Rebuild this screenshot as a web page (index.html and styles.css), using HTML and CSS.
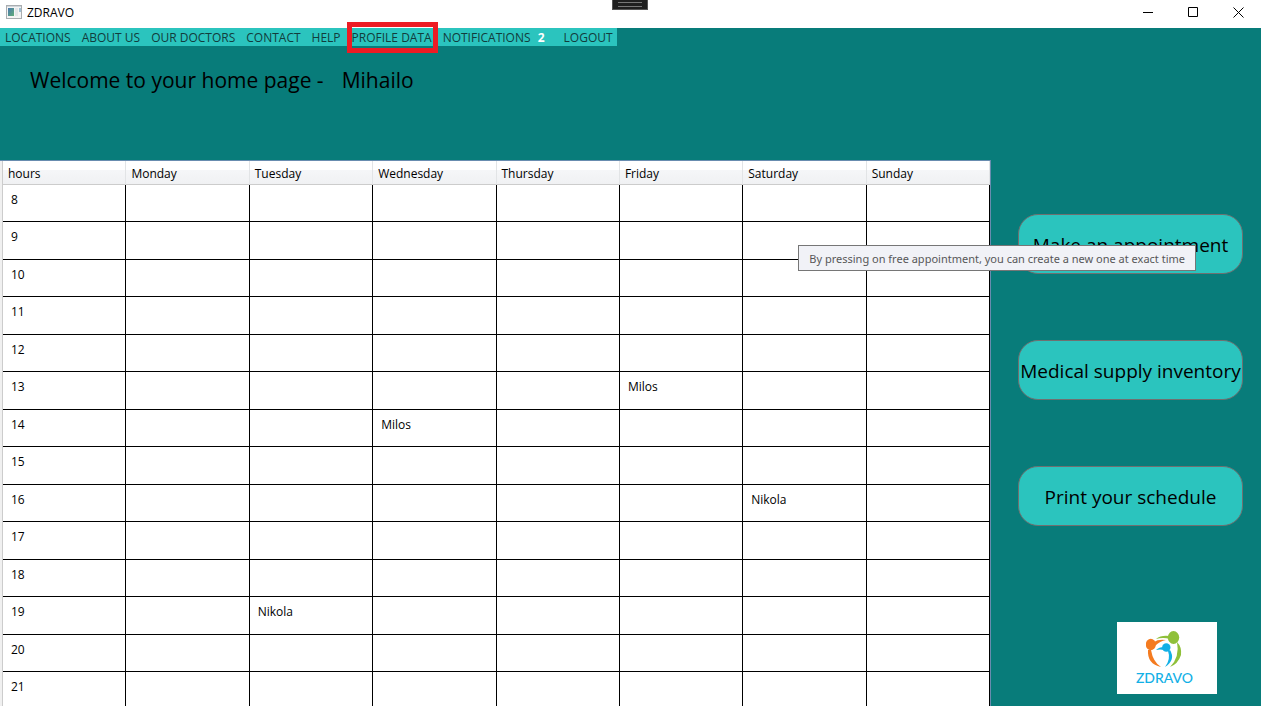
FILE: index.html
```html
<!DOCTYPE html>
<html lang="en">
<head>
<meta charset="utf-8">
<title>ZDRAVO</title>
<link rel="stylesheet" href="styles.css">
</head>
<body>
<div class="window">
  <header class="titlebar">
    <svg class="app-icon" width="16" height="14" viewBox="0 0 16 14" aria-hidden="true">
      <defs><linearGradient id="pane" x1="0" y1="0" x2="1" y2="1"><stop offset="0" stop-color="#4a78b0"/><stop offset="1" stop-color="#5fae78"/></linearGradient></defs>
      <rect x=".5" y=".5" width="15" height="13" fill="#f4f4f4" stroke="#a9adb0"/>
      <rect x="1" y="1" width="14" height="1" fill="#cfd5da"/>
      <rect x="2" y="3" width="6" height="8" fill="url(#pane)"/>
      <rect x="9" y="3" width="3" height="8" fill="#e2e6e8"/>
      <rect x="13" y="3" width="2" height="4" fill="#9fc0d4"/>
    </svg>
    <span class="title">ZDRAVO</span>
    <div class="grip" aria-hidden="true"></div>
    <div class="controls">
      <button type="button" aria-label="Minimize"><svg width="11" height="11" viewBox="0 0 11 11"><path d="M0 5.5h10"/></svg></button>
      <button type="button" aria-label="Maximize"><svg width="11" height="11" viewBox="0 0 11 11"><path d="M.5.5h9v9h-9z"/></svg></button>
      <button type="button" aria-label="Close"><svg width="11" height="11" viewBox="0 0 11 11"><path d="M.5.5l10 10M10.500 .5l-10 10"/></svg></button>
    </div>
  </header>
  <nav class="menu">
    <a href="#locations">LOCATIONS</a>
    <a href="#about">ABOUT US</a>
    <a href="#doctors">OUR DOCTORS</a>
    <a href="#contact">CONTACT</a>
    <a href="#help">HELP</a>
    <a href="#profile" class="marked">PROFILE DATA</a>
    <a href="#notifications">NOTIFICATIONS <b class="count">2</b></a>
    <a href="#logout">LOGOUT</a>
  </nav>
  <h1 class="welcome"><span>Welcome to your home page -</span><span>Mihailo</span></h1>
  <main class="content">
    <div class="schedule">
      <table>
        <thead><tr><th>hours</th><th>Monday</th><th>Tuesday</th><th>Wednesday</th><th>Thursday</th><th>Friday</th><th>Saturday</th><th>Sunday</th></tr></thead>
        <tbody>
          <tr><td>8</td><td></td><td></td><td></td><td></td><td></td><td></td><td></td></tr>
          <tr><td>9</td><td></td><td></td><td></td><td></td><td></td><td></td><td></td></tr>
          <tr><td>10</td><td></td><td></td><td></td><td></td><td></td><td></td><td></td></tr>
          <tr><td>11</td><td></td><td></td><td></td><td></td><td></td><td></td><td></td></tr>
          <tr><td>12</td><td></td><td></td><td></td><td></td><td></td><td></td><td></td></tr>
          <tr><td>13</td><td></td><td></td><td></td><td></td><td>Milos</td><td></td><td></td></tr>
          <tr><td>14</td><td></td><td></td><td>Milos</td><td></td><td></td><td></td><td></td></tr>
          <tr><td>15</td><td></td><td></td><td></td><td></td><td></td><td></td><td></td></tr>
          <tr><td>16</td><td></td><td></td><td></td><td></td><td></td><td>Nikola</td><td></td></tr>
          <tr><td>17</td><td></td><td></td><td></td><td></td><td></td><td></td><td></td></tr>
          <tr><td>18</td><td></td><td></td><td></td><td></td><td></td><td></td><td></td></tr>
          <tr><td>19</td><td></td><td>Nikola</td><td></td><td></td><td></td><td></td><td></td></tr>
          <tr><td>20</td><td></td><td></td><td></td><td></td><td></td><td></td><td></td></tr>
          <tr><td>21</td><td></td><td></td><td></td><td></td><td></td><td></td><td></td></tr>
        </tbody>
      </table>
    </div>
    <aside class="actions">
      <div class="with-tip">
        <button type="button" class="action" aria-describedby="tip">Make an appointment</button>
        <div class="tooltip" role="tooltip" id="tip">By pressing on free appointment, you can create a new one at exact time</div>
      </div>
      <button type="button" class="action">Medical supply inventory</button>
      <button type="button" class="action">Print your schedule</button>
      <div class="logo">
        <svg width="38" height="40" viewBox="0 0 38 40" aria-hidden="true">
          <g fill="#8fc03a"><ellipse cx="27.500" cy="7.500" rx="5.700" ry="6.500"/><path d="M23 6Q15 5 10 9Q17 7 24 9Z"/><path d="M31 12Q36 17 35 25Q32 34 24 37Q34 27 31 12Z"/></g>
          <g fill="#f47b20"><ellipse cx="4.800" cy="14.500" rx="5" ry="5.700"/><path d="M8 12Q12 9 20 10Q14 11 9 16Z"/><path d="M2 20Q1 34 15 37Q7 32 5 20Z"/></g>
          <g fill="#12b0e6"><circle cx="20.300" cy="17.500" r="4.200"/><path d="M18 17Q13 17 10 20Q14 19 18 20Z"/><path d="M24 20Q30 30 19 37Q25 29 22 21Z"/></g>
        </svg>
        <span>ZDRAVO</span>
      </div>
    </aside>
  </main>
</div>
</body>
</html>
```
FILE: styles.css
```css
* { box-sizing: border-box; }
body {
  margin: 0;
  background: #087c7a;
  color: #000;
  font: 12px/16px "Open Sans", "Noto Sans", sans-serif;
}
button { font: inherit; color: inherit; border: 0; padding: 0; }
.window { display: flex; flex-direction: column; height: 100vh; overflow: hidden; }

.titlebar { position: relative; display: flex; flex: none; align-items: center; height: 28px; padding: 0 0 4px 6px; background: #fff; }
.title { margin-left: 5px; padding-top: 2px; }
.grip { position: absolute; top: 0; left: 50%; width: 36px; height: 10px; margin-left: -19px; border: 1px solid #555; border-top: 0; background: #1f1f1f; }
.grip::before { content: ""; display: block; height: 3px; margin: 2px 5px; border: solid #777; border-width: 1px 0; }
.controls { display: flex; margin-left: auto; }
.controls button { display: flex; align-items: center; justify-content: center; width: 45px; height: 24px; background: none; }
.controls svg { fill: none; stroke: #000; }

.menu { display: flex; align-self: flex-start; flex: none; gap: 11px; height: 18px; padding: 1px 4px 0 5px; background: #2bc4be; line-height: 18px; }
.menu a { position: relative; color: #123c3c; text-decoration: none; white-space: nowrap; }
.count { margin: 0 8px 0 4px; color: #fff; }
.marked::after { content: ""; position: absolute; inset: -7px -6px -7px -5px; border: 5px solid #ed1c24; }

.welcome { display: flex; flex: none; gap: 18px; height: 114px; margin: 0; padding: 18px 30px; font-size: 21px; line-height: 32px; font-weight: 400; }

.content { display: flex; flex: 1; min-height: 0; }
.schedule { flex: 1; min-width: 0; overflow: hidden; border: solid #688caf; border-width: 1px 1px 0 0; background: #f0f0f0; padding-left: 2px; }
table { width: 100%; table-layout: fixed; border-collapse: separate; border-spacing: 0; border-left: 1px solid #ccc; background: #fff; }
th, td { text-align: left; font-weight: 400; }
th { height: 24px; padding: 3px 5px 0; border-right: 1px solid #e2e4e6; border-bottom: 1px solid #ccc; background: linear-gradient(#fff 40%, #f5f6f8 41%, #f0f1f3); }
td { height: 37px; padding: 7px 8px; border: solid #000; border-width: 0 1px 1px 0; vertical-align: top; }
tr:nth-child(even) td { height: 38px; }

.actions { display: flex; flex: none; flex-direction: column; align-items: flex-end; gap: 66px; width: 270px; padding: 54px 18px 12px 0; }
.with-tip { position: relative; }
.action { display: block; width: 225px; height: 60px; padding-top: 2px; border: 1px solid #707070; border-radius: 20px; background: #2bc4be; font-size: 19px; line-height: 28px; white-space: nowrap; }
.tooltip { position: absolute; top: 31px; right: 47px; padding: 5px 10px 3px; border: 1px solid #767676; background: #f1f2f7; color: #575757; font: 11px/16px "Noto Sans", sans-serif; white-space: nowrap; }
.logo { display: flex; flex-direction: column; align-items: center; width: 100px; height: 72px; margin: auto 26px 0 0; padding: 8px 5px 0 0; background: #fff; color: #12b0e6; font: 500 14px/15px Lato, sans-serif; }
.logo svg { flex: none; }
```
